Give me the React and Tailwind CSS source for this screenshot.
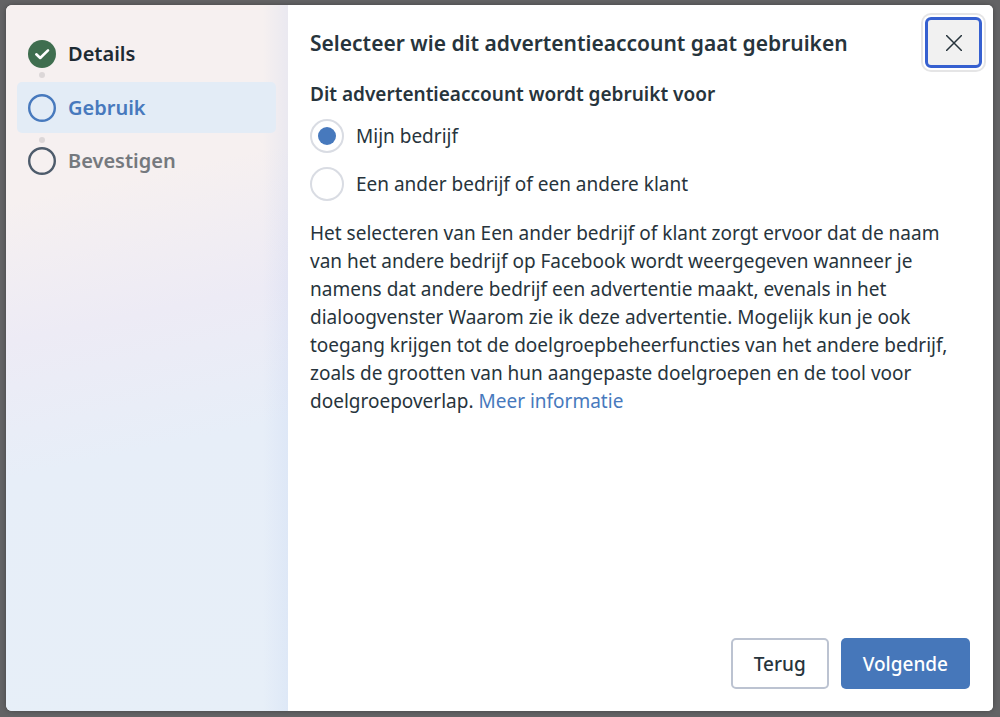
import { useState } from "react";

function StepIcon({ state }) {
  if (state === "done") {
    return (
      <svg viewBox="0 0 28 28" className="size-7 shrink-0" aria-hidden="true">
        <circle cx="14" cy="14" r="14" fill="#3f6e4f" />
        <path d="M8.3 14.3 L12.2 18 L20 10.4" fill="none" stroke="#fff" strokeWidth="2.6" strokeLinecap="round" strokeLinejoin="round" />
      </svg>
    );
  }
  return (
    <svg viewBox="0 0 28 28" className="size-7 shrink-0" aria-hidden="true">
      <circle cx="14" cy="14" r="12.8" fill="none" stroke={state === "current" ? "#4779bd" : "#4d5b6b"} strokeWidth="2.4" />
    </svg>
  );
}

function StepDot() {
  return <li aria-hidden="true" className="ml-[22px] size-[6px] rounded-full bg-[#dcd7d8]" />;
}

function Choice({ label, checked, onChange }) {
  return (
    <label className="flex items-center gap-3">
      <input
        type="radio"
        name="usage"
        checked={checked}
        onChange={onChange}
        className="grid size-[34px] shrink-0 appearance-none place-items-center rounded-full border-2 border-[#d9dce3] bg-white before:size-[18px] before:rounded-full checked:before:bg-[#4779bd]"
      />
      <span>{label}</span>
    </label>
  );
}

export default function App() {
  const [usage, setUsage] = useState("own");

  return (
    <div className="flex min-h-screen bg-[#636365] pt-[5px] pr-[7px] pb-[6px] pl-[6px] font-['Noto_Sans',sans-serif] text-[19px] leading-7 text-[#27343c]">
      <div role="dialog" aria-labelledby="dialog-title" className="flex flex-1 rounded-[6px] bg-white shadow-[0_0_5px_rgba(0,0,0,0.3)]">
        <nav aria-label="Stappen" className="w-[282px] shrink-0 rounded-l-[6px] bg-[linear-gradient(to_right,transparent_91%,rgba(180,200,240,0.18)_100%),linear-gradient(168deg,#f6f0f0_0%,#f6f0f0_26%,#edebf5_44%,#e7eef8_62%,#e7eff8_100%)] pt-[35px] pr-3 pl-[11px] text-[20px] font-semibold">
          <ol className="flex flex-col gap-1">
            <li className="flex h-7 items-center gap-3 px-[11px] text-[#1d2a33]">
              <StepIcon state="done" />
              Details
            </li>
            <StepDot />
            <li aria-current="step" className="flex h-[51px] items-center gap-3 rounded-[5px] bg-[#e3ecf6] px-[11px] text-[#4779bd]">
              <StepIcon state="current" />
              Gebruik
            </li>
            <StepDot />
            <li className="flex h-7 items-center gap-3 px-[11px] text-[#75797e]">
              <StepIcon state="todo" />
              Bevestigen
            </li>
          </ol>
        </nav>

        <main className="flex flex-1 flex-col rounded-[5px] bg-white pr-[23px] pb-[22px] pl-[22px]">
          <header className="flex items-start justify-between pt-3">
            <h1 id="dialog-title" className="pt-3 text-[21px] font-semibold">
              Selecteer wie dit advertentieaccount gaat gebruiken
            </h1>
            <button
              type="button"
              aria-label="Sluiten"
              className="-mr-3 grid h-[51px] w-[57px] shrink-0 place-items-center rounded-[6px] border-3 border-[#3660d0] bg-[#f1f1f1] shadow-[0_0_0_2px_#fff,0_0_0_4px_#e5e5e6]"
            >
              <svg viewBox="0 0 16 16" className="size-4" aria-hidden="true">
                <path d="M0.5 0.5 L15.5 15.5 M15.5 0.5 L0.5 15.5" stroke="#27343c" strokeWidth="1.5" strokeLinecap="round" />
              </svg>
            </button>
          </header>

          <fieldset className="pt-3">
            <legend className="contents font-semibold">Dit advertentieaccount wordt gebruikt voor</legend>
            <div className="flex flex-col gap-[14px] pt-[11px]">
              <Choice label="Mijn bedrijf" checked={usage === "own"} onChange={() => setUsage("own")} />
              <Choice label="Een ander bedrijf of een andere klant" checked={usage === "other"} onChange={() => setUsage("other")} />
            </div>
          </fieldset>

          <p className="pt-[18px]">
            Het selecteren van Een ander bedrijf of klant zorgt ervoor dat de naam van het andere bedrijf op Facebook wordt
            weergegeven wanneer je namens dat andere bedrijf een advertentie maakt, evenals in het dialoogvenster Waarom zie
            ik deze advertentie. Mogelijk kun je ook toegang krijgen tot de doelgroepbeheerfuncties van het andere bedrijf,
            zoals de grootten van hun aangepaste doelgroepen en de tool voor doelgroepoverlap.{" "}
            <a href="#meer-informatie" className="text-[#4779bd]">Meer informatie</a>
          </p>

          <footer className="mt-auto flex justify-end gap-3 font-medium">
            <button type="button" className="h-[51px] rounded-[5px] border-2 border-[#bcc3d1] bg-white px-[21px]">
              Terug
            </button>
            <button type="button" className="h-[51px] rounded-[5px] bg-[#4677ba] px-[22px] text-white">
              Volgende
            </button>
          </footer>
        </main>
      </div>
    </div>
  );
}
